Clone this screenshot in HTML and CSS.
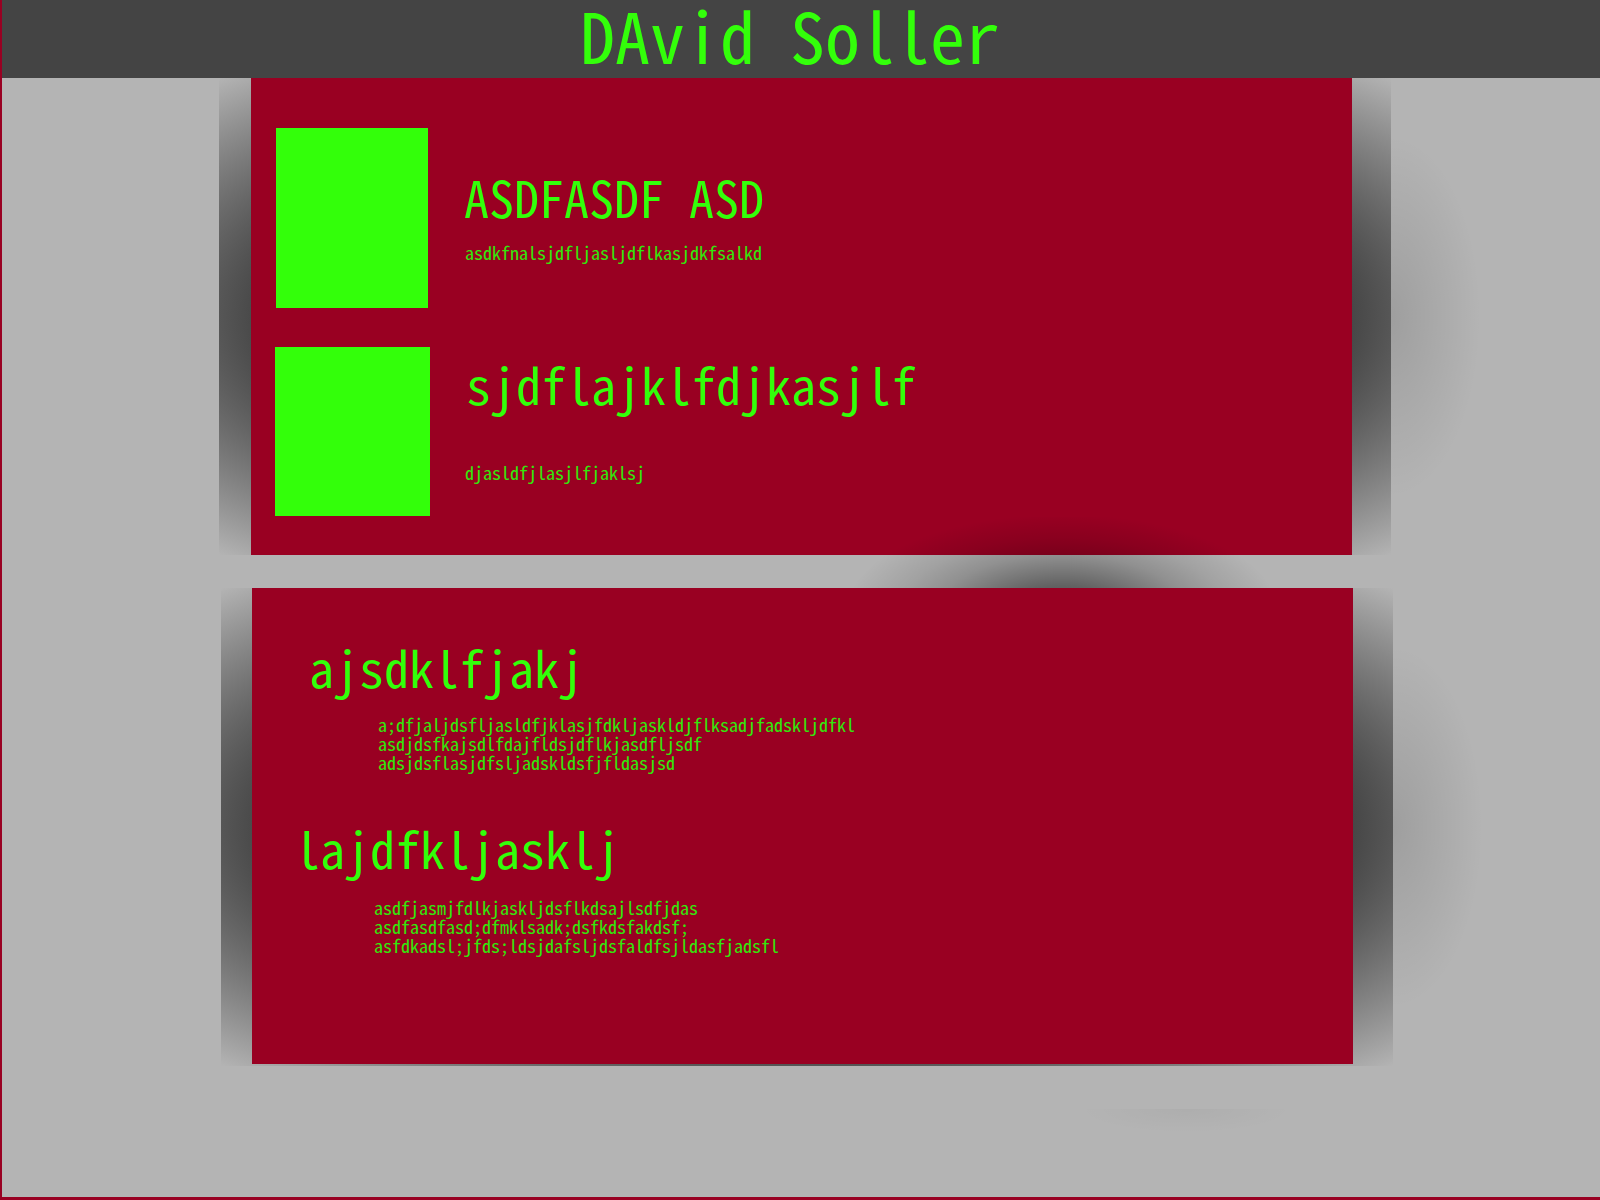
FILE: index.html
```html
<!DOCTYPE html>
<html lang="en">
<head>
<meta charset="utf-8">
<title>DAvid Soller</title>
<link rel="stylesheet" href="styles.css">
</head>
<body>
<div class="page">
  <header class="top">
    <h1 class="title">DAvid Soller</h1>
  </header>
  <main class="content">
    <section class="panel panel-a">
      <div class="card card-a">
        <div class="row row-1">
          <div class="swatch swatch-1"></div>
          <div class="row-text">
            <h2 class="heading heading-1">ASDFASDF ASD</h2>
            <p class="small small-1">asdkfnalsjdfljasljdflkasjdkfsalkd</p>
          </div>
        </div>
        <div class="row row-2">
          <div class="swatch swatch-2"></div>
          <div class="row-text">
            <h2 class="heading heading-2">sjdflajklfdjkasjlf</h2>
            <p class="small small-2">djasldfjlasjlfjaklsj</p>
          </div>
        </div>
      </div>
    </section>
    <div class="gap-shadow"></div>
    <section class="panel panel-b">
      <div class="card card-b">
        <h2 class="heading heading-3">ajsdklfjakj</h2>
        <p class="small para para-1">a;dfjaljdsfljasldfjklasjfdkljaskldjflksadjfadskljdfkl<br>asdjdsfkajsdlfdajfldsjdflkjasdfljsdf<br>adsjdsflasjdfsljadskldsfjfldasjsd</p>
        <h2 class="heading heading-4">lajdfkljasklj</h2>
        <p class="small para para-2">asdfjasmjfdlkjaskljdsflkdsajlsdfjdas<br>asdfasdfasd;dfmklsadk;dsfkdsfakdsf;<br>asfdkadsl;jfds;ldsjdafsljdsfaldfsjldasfjadsfl</p>
      </div>
    </section>
    <div class="floor-shadow"></div>
  </main>
</div>
</body>
</html>
```

FILE: styles.css
```css
html {
  background: #990022;
}

body {
  margin: 0;
}

.page {
  margin-left: 2px;
  height: 1197px;
  background: #b4b4b4;
  position: relative;
  overflow: hidden;
  font-family: "Noto Sans Mono CJK SC", "Noto Sans CJK SC", monospace;
  font-feature-settings: "hwid" 1;
  font-weight: 300;
  color: #33ff0a;
}

.top {
  height: 78px;
  background: #444444;
  padding-right: 22px;
}

.title {
  margin: 0;
  font-size: 70px;
  font-weight: 300;
  line-height: 68px;
  text-align: center;
}

.content {
  position: relative;
}

.panel {
  position: relative;
  width: 1172px;
  background: radial-gradient(ellipse farthest-corner at 50% 50%, #444444 65%, #b4b4b4 100%);
}

.panel::after {
  content: "";
  position: absolute;
  top: 0;
  left: 100%;
  width: 110px;
  height: 100%;
  background: radial-gradient(ellipse 90px 38% at 0 50%, rgba(0, 0, 0, 0.12), rgba(0, 0, 0, 0));
}

.panel-a {
  margin-left: 217px;
  height: 477px;
}

.panel-b {
  margin-left: 219px;
  margin-top: 40px;
  height: 478px;
}

.card {
  position: relative;
  width: 1101px;
  background: #990022;
  box-sizing: border-box;
}

.card-a {
  margin-left: 32px;
  height: 477px;
  padding: 50px 0 0 25px;
}

.card-b {
  margin-left: 31px;
  margin-top: -7px;
  height: 476px;
  padding-top: 48px;
  z-index: 2;
  overflow: hidden;
}

.row {
  display: flex;
  align-items: flex-start;
}

.row-2 {
  margin-top: 39px;
}

.swatch {
  background: #33ff0a;
  flex: none;
}

.swatch-1 {
  width: 152px;
  height: 180px;
}

.swatch-2 {
  width: 155px;
  height: 169px;
  margin-left: -1px;
}

.row-text {
  margin-left: 36px;
}

.row-2 .row-text {
  margin-left: 35px;
}

.heading {
  margin: 0;
  font-size: 50px;
  font-weight: 300;
  line-height: 60px;
  white-space: nowrap;
}

.small {
  margin: 0;
  font-size: 18px;
  line-height: 20px;
  white-space: nowrap;
  color: #31e80c;
}

.heading-1 {
  margin-top: 38px;
}

.small-1 {
  margin-top: 16px;
  margin-left: 1px;
}

.heading-2 {
  margin-top: 6px;
  margin-left: 1px;
}

.small-2 {
  margin-top: 49px;
}

.para {
  line-height: 19px;
}

.heading-3 {
  margin-left: 57px;
}

.para-1 {
  margin-top: 19px;
  margin-left: 126px;
}

.heading-4 {
  margin-top: 45px;
  margin-left: 43px;
}

.para-2 {
  margin-top: 21px;
  margin-left: 122px;
}

.gap-shadow {
  position: absolute;
  top: 439px;
  left: 830px;
  width: 460px;
  height: 186px;
  z-index: 1;
  background: radial-gradient(ellipse 225px 100px at 230px 93px, rgba(0, 0, 0, 0.62) 0%, rgba(0, 0, 0, 0.45) 25%, rgba(0, 0, 0, 0.2) 55%, rgba(0, 0, 0, 0.1) 72%, rgba(0, 0, 0, 0) 96%);
}

.floor-shadow {
  position: absolute;
  top: 1031px;
  left: 1076px;
  width: 216px;
  height: 24px;
  background: radial-gradient(ellipse 50% 100% at 50% 0, rgba(0, 0, 0, 0.035), rgba(0, 0, 0, 0));
}
```
